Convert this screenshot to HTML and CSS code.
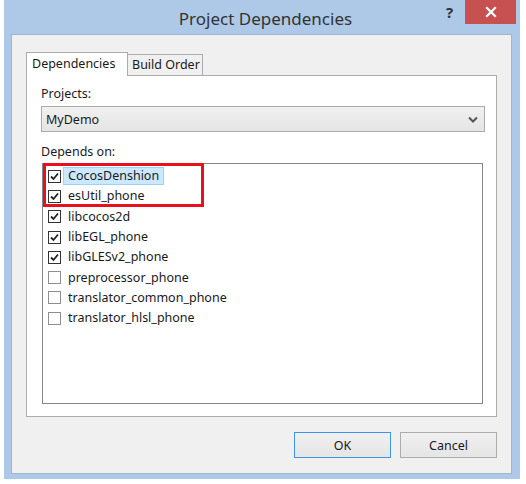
FILE: index.html
```html
<!DOCTYPE html>
<html>
<head>
<meta charset="utf-8">
<link rel="stylesheet" href="styles.css">
</head>
<body>
<div class="window">
  <div class="titlebar">
    <div class="title">Project Dependencies</div>
    <div class="help">?</div>
    <div class="close"><svg width="12" height="12" viewBox="0 0 12 12"><path d="M2 2 L10 10 M10 2 L2 10" stroke="#fff" stroke-width="2.2" stroke-linecap="square"/></svg></div>
  </div>
  <div class="client">
    <div class="tabs">
      <div class="tab active">Dependencies</div>
      <div class="tab">Build Order</div>
    </div>
    <div class="panel">
      <div class="label">Projects:</div>
      <div class="combo">
        <span>MyDemo</span>
        <svg class="chev" width="10" height="7" viewBox="0 0 10 7"><path d="M1 1.5 L5 5.5 L9 1.5" fill="none" stroke="#555" stroke-width="2"/></svg>
      </div>
      <div class="label label2">Depends on:</div>
      <div class="list">
        <div class="row"><span class="cb on"><svg width="11" height="11" viewBox="0 0 11 11"><path d="M2 5.5 L4.5 8 L9 2.5" fill="none" stroke="#222" stroke-width="1.8"/></svg></span><span class="txt sel">CocosDenshion</span></div>
        <div class="row"><span class="cb on"><svg width="11" height="11" viewBox="0 0 11 11"><path d="M2 5.5 L4.5 8 L9 2.5" fill="none" stroke="#222" stroke-width="1.8"/></svg></span><span class="txt">esUtil_phone</span></div>
        <div class="row"><span class="cb on"><svg width="11" height="11" viewBox="0 0 11 11"><path d="M2 5.5 L4.5 8 L9 2.5" fill="none" stroke="#222" stroke-width="1.8"/></svg></span><span class="txt">libcocos2d</span></div>
        <div class="row"><span class="cb on"><svg width="11" height="11" viewBox="0 0 11 11"><path d="M2 5.5 L4.5 8 L9 2.5" fill="none" stroke="#222" stroke-width="1.8"/></svg></span><span class="txt">libEGL_phone</span></div>
        <div class="row"><span class="cb on"><svg width="11" height="11" viewBox="0 0 11 11"><path d="M2 5.5 L4.5 8 L9 2.5" fill="none" stroke="#222" stroke-width="1.8"/></svg></span><span class="txt">libGLESv2_phone</span></div>
        <div class="row"><span class="cb"></span><span class="txt">preprocessor_phone</span></div>
        <div class="row"><span class="cb"></span><span class="txt">translator_common_phone</span></div>
        <div class="row"><span class="cb"></span><span class="txt">translator_hlsl_phone</span></div>
        <div class="mark"></div>
      </div>
    </div>
    <div class="buttons">
      <div class="btn default">OK</div>
      <div class="btn">Cancel</div>
    </div>
  </div>
</div>
</body>
</html>
```
FILE: styles.css
```css
html, body {
  margin: 0;
  padding: 0;
  background: #ffffff;
}
body {
  font-family: "Noto Sans", "Open Sans", sans-serif;
  font-size: 12.5px;
  color: #1a1a1a;
}
.window {
  margin-left: 4px;
  width: 516px;
  height: 479px;
  background: #adc9e7;
  display: flex;
  flex-direction: column;
  box-sizing: border-box;
  padding: 0 8px 5px 7px;
}
.titlebar {
  position: relative;
  height: 34px;
  flex: none;
}
.title {
  text-align: center;
  font-size: 17px;
  line-height: 38px;
  color: #333;
  padding-left: 8px;
}
.help {
  position: absolute;
  left: 435px;
  top: 2px;
  font-weight: bold;
  font-size: 15px;
  color: #333;
}
.close {
  position: absolute;
  left: 454px;
  top: 0;
  width: 51px;
  height: 24px;
  background: #c75050;
  display: flex;
  align-items: center;
  justify-content: center;
}
.client {
  flex: 1;
  background: #f0f0f0;
  border: 1px solid #9fb6cf;
  display: flex;
  flex-direction: column;
  padding: 17px 14px 15px 14px;
  box-sizing: border-box;
}
.tabs {
  display: flex;
  align-items: flex-end;
  height: 23px;
  position: relative;
  z-index: 1;
}
.tab {
  box-sizing: border-box;
  border: 1px solid #acacac;
  border-bottom: none;
  background: #f0f0f0;
  height: 21px;
  line-height: 19px;
  padding: 0 4px;
  width: 76px;
  margin-left: -1px;
  white-space: nowrap;
}
.tab.active {
  background: #fff;
  height: 24px;
  line-height: 22px;
  width: 102px;
  margin-left: 0;
  margin-bottom: -1px;
  padding: 0 5px;
  border-right: 1px solid #acacac;
}
.panel {
  width: 471px;
  height: 342px;
  box-sizing: border-box;
  background: #fff;
  border: 1px solid #acacac;
  padding: 9px 10px 0 14px;
}
.label {
  line-height: 18px;
}
.label2 {
  margin-top: 11px;
}
.combo {
  margin-top: 3px;
  width: 444px;
  height: 26px;
  box-sizing: border-box;
  border: 1px solid #acacac;
  background: linear-gradient(#f0f0f0, #e5e5e5);
  display: flex;
  align-items: center;
  justify-content: space-between;
  padding: 0 6px 0 4px;
}
.list {
  position: relative;
  margin-top: 2px;
  margin-left: 1px;
  width: 441px;
  height: 241px;
  box-sizing: border-box;
  border: 1px solid #828790;
  padding: 2px 0 0 5px;
}
.row {
  height: 20.3px;
  display: flex;
  align-items: center;
}
.cb {
  width: 13px;
  height: 13px;
  box-sizing: border-box;
  border: 1px solid #8f8f8f;
  background: #fff;
  display: flex;
  align-items: center;
  justify-content: center;
  flex: none;
}
.cb.on {
  border-color: #333;
}
.txt {
  margin-left: 2px;
  padding: 0 4px;
  line-height: 16px;
  border: 1px solid transparent;
  white-space: nowrap;
}
.txt.sel {
  background: #cce8ff;
  border-color: #99d1ff;
}
.mark {
  position: absolute;
  left: 0;
  top: -1px;
  width: 161px;
  height: 44px;
  box-sizing: border-box;
  border: 3px solid #e8101a;
}
.buttons {
  margin-top: auto;
  display: flex;
  justify-content: flex-end;
  gap: 9px;
}
.btn {
  width: 97px;
  height: 26px;
  box-sizing: border-box;
  border: 1px solid #acacac;
  background: linear-gradient(#f0f0f0, #e5e5e5);
  display: flex;
  align-items: center;
  justify-content: center;
}
.btn.default {
  border-color: #3c96e8;
}
```
